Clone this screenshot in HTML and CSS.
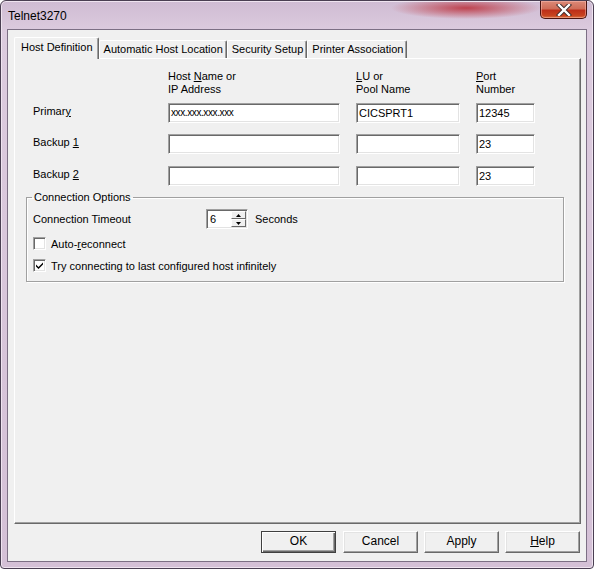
FILE: index.html
```html
<!DOCTYPE html>
<html>
<head>
<meta charset="utf-8">
<title>Telnet3270</title>
<link rel="stylesheet" href="styles.css">
</head>
<body>
<div class="window">
  <div class="titlebar">
    <span class="title">Telnet3270</span>
    <div class="close-btn">
      <svg width="16" height="12" viewBox="0 0 16 12">
        <path d="M3 1 L13 11 M13 1 L3 11" stroke="#3a2a2a" stroke-width="4.2" stroke-linecap="square"/>
        <path d="M3 1 L13 11 M13 1 L3 11" stroke="#ffffff" stroke-width="2.4" stroke-linecap="square"/>
      </svg>
    </div>
  </div>
  <div class="client">
    <div class="tabs">
      <div class="tab active">Host Definition</div>
      <div class="tab">Automatic Host Location</div>
      <div class="tab">Security Setup</div>
      <div class="tab">Printer Association</div>
    </div>
    <div class="panel">
      <div class="hosts">
        <div></div>
        <div class="colhead">Host <u>N</u>ame or<br>IP Address</div>
        <div class="colhead"><u>L</u>U or<br>Pool Name</div>
        <div class="colhead"><u>P</u>ort<br>Number</div>

        <div class="rowlabel">Primar<u>y</u></div>
        <div class="field small-text">xxx.xxx.xxx.xxx</div>
        <div class="field">CICSPRT1</div>
        <div class="field">12345</div>

        <div class="rowlabel">Backup <u>1</u></div>
        <div class="field"></div>
        <div class="field"></div>
        <div class="field">23</div>

        <div class="rowlabel">Backup <u>2</u></div>
        <div class="field"></div>
        <div class="field"></div>
        <div class="field">23</div>
      </div>

      <fieldset class="group">
        <legend>Connection Options</legend>
        <div class="opt-row timeout-row">
          <span class="timeout-label">Connection Timeout</span>
          <div class="spinner">
            <div class="spin-value">6</div>
            <div class="spin-btns">
              <div class="spin-btn"><svg width="5" height="3" viewBox="0 0 5 3"><path d="M0 3 L2.5 0 L5 3 Z" fill="#000"/></svg></div>
              <div class="spin-btn"><svg width="5" height="3" viewBox="0 0 5 3"><path d="M0 0 L5 0 L2.5 3 Z" fill="#000"/></svg></div>
            </div>
          </div>
          <span class="seconds">Seconds</span>
        </div>
        <div class="opt-row check-row1">
          <span class="checkbox"></span>
          <span>Auto-<u>r</u>econnect</span>
        </div>
        <div class="opt-row check-row2">
          <span class="checkbox">
            <svg width="9" height="9" viewBox="0 0 9 9"><path d="M1 3.5 L3.5 6 L8 1.5 L8 3.5 L3.5 8 L1 5.5 Z" fill="#000"/></svg>
          </span>
          <span>Try connecting to last configured host infinitely</span>
        </div>
      </fieldset>
    </div>
    <div class="buttons">
      <div class="btn default">OK</div>
      <div class="btn">Cancel</div>
      <div class="btn">Apply</div>
      <div class="btn"><u>H</u>elp</div>
    </div>
  </div>
</div>
</body>
</html>
```

FILE: styles.css
```css
* { box-sizing: border-box; }

html, body {
  margin: 0;
  padding: 0;
  background: #ffffff;
}

body {
  font-family: "Liberation Sans", Arial, sans-serif;
  font-size: 11px;
  color: #000;
}

.window {
  width: 594px;
  height: 569px;
  border: 1px solid #4a3f52;
  border-radius: 6px 6px 4px 4px;
  padding: 0 6px 6px 6px;
  display: flex;
  flex-direction: column;
  background:
    radial-gradient(ellipse 75px 11px at 465px 7px, rgba(185, 35, 45, 0.8), rgba(185, 35, 45, 0) 100%),
    linear-gradient(to bottom, #cfbcd3 0px, #dccbde 30px, #d4c0d6 100%);
  box-shadow: inset 0 0 0 1px #efe4f0;
}

.titlebar {
  height: 28px;
  display: flex;
  align-items: flex-start;
  flex-shrink: 0;
}

.title {
  font-size: 12px;
  line-height: 16px;
  padding: 7px 0 0 1px;
  color: #000;
}

.close-btn {
  margin-left: auto;
  width: 47px;
  height: 18px;
  border: 1px solid #4a1410;
  border-top: none;
  border-radius: 0 0 5px 5px;
  background: linear-gradient(to bottom, #dc8a78 0%, #cf6d58 45%, #bd2f19 55%, #c8431f 85%, #d8703e 100%);
  box-shadow: inset 0 0 0 1px rgba(255, 200, 190, 0.45);
  display: flex;
  align-items: center;
  justify-content: center;
}

.client {
  flex: 1;
  background: #f0f0f0;
  border: 1px solid #7c6f84;
  padding: 7px 5px 0 6px;
  display: flex;
  flex-direction: column;
}

.tabs {
  display: flex;
  align-items: flex-end;
  height: 21px;
  position: relative;
  z-index: 1;
}

.tab {
  height: 18px;
  padding: 0 3px 0 4px;
  line-height: 17px;
  background: #f0f0f0;
  border-top: 1px solid #ffffff;
  border-left: 1px solid #ffffff;
  border-right: 1px solid #696969;
  box-shadow: inset -1px 0 0 #a0a0a0;
  border-radius: 2px 2px 0 0;
  white-space: nowrap;
}

.tab.active {
  height: 22px;
  margin-bottom: -1px;
  padding: 0 5px 0 6px;
  line-height: 19px;
}

.panel {
  height: 466px;
  border-top: 1px solid #ffffff;
  border-left: 1px solid #ffffff;
  border-right: 1px solid #696969;
  border-bottom: 1px solid #696969;
  box-shadow: inset -1px -1px 0 #a0a0a0;
  padding: 11px 15px 0 11px;
  display: flex;
  flex-direction: column;
}

.hosts {
  display: grid;
  margin-left: 7px;
  grid-template-columns: 119px 172px 104px 59px;
  grid-template-rows: 33px 31px 32px 20px;
  column-gap: 16px;
  align-items: start;
}

.colhead {
  line-height: 13px;
}

.rowlabel {
  line-height: 17px;
}

.field {
  height: 20px;
  background: #fff;
  border-top: 1px solid #a0a0a0;
  border-left: 1px solid #a0a0a0;
  border-right: 1px solid #ffffff;
  border-bottom: 1px solid #ffffff;
  box-shadow: inset 1px 1px 0 #696969, inset -1px -1px 0 #e3e3e3;
  padding: 0 0 0 2px;
  line-height: 18px;
  white-space: nowrap;
  overflow: hidden;
}

.field.small-text {
  letter-spacing: -0.4px;
  font-size: 10px;
}

.group {
  margin: 5px 0 0 0;
  width: 538px;
  border: 1px solid #a0a0a0;
  box-shadow: inset 1px 1px 0 #ffffff, 1px 1px 0 #ffffff;
  padding: 5px 6px 4px 6px;
}

.group legend {
  padding: 0 2px;
  margin-left: -1px;
  line-height: 13px;
}

.opt-row {
  display: flex;
  align-items: center;
}

.timeout-row {
  height: 20px;
  margin-bottom: 4px;
}

.check-row1 { height: 21px; }
.check-row2 { height: 23px; }

.timeout-label {
  width: 173px;
}

.spinner {
  width: 42px;
  height: 20px;
  display: flex;
  background: #fff;
  border-top: 1px solid #a0a0a0;
  border-left: 1px solid #a0a0a0;
  border-right: 1px solid #ffffff;
  border-bottom: 1px solid #ffffff;
  box-shadow: inset 1px 1px 0 #696969, inset -1px -1px 0 #e3e3e3;
}

.spin-value {
  flex: 1;
  padding: 1px 0 0 3px;
  line-height: 17px;
}

.spin-btns {
  width: 16px;
  padding: 1px 1px 1px 0;
  display: flex;
  flex-direction: column;
}

.spin-btn {
  flex: 1;
  background: #f0f0f0;
  border-top: 1px solid #ffffff;
  border-left: 1px solid #ffffff;
  border-right: 1px solid #696969;
  border-bottom: 1px solid #696969;
  display: flex;
  align-items: center;
  justify-content: center;
}

.spin-btn svg { display: block; }

.seconds {
  margin-left: 7px;
}

.checkbox {
  width: 13px;
  height: 13px;
  margin-right: 5px;
  background: #fff;
  border-top: 1px solid #a0a0a0;
  border-left: 1px solid #a0a0a0;
  border-right: 1px solid #ffffff;
  border-bottom: 1px solid #ffffff;
  box-shadow: inset 1px 1px 0 #696969, inset -1px -1px 0 #e3e3e3;
  display: flex;
  align-items: center;
  justify-content: center;
  flex-shrink: 0;
}

.checkbox svg { display: block; }

.buttons {
  margin-top: 7px;
  margin-right: 1px;
  display: flex;
  justify-content: flex-end;
  gap: 6px;
}

.btn {
  width: 75px;
  height: 22px;
  background: #f0f0f0;
  border-top: 1px solid #ffffff;
  border-left: 1px solid #ffffff;
  border-right: 1px solid #696969;
  border-bottom: 1px solid #696969;
  box-shadow: inset -1px -1px 0 #a0a0a0, inset 1px 1px 0 #e3e3e3;
  text-align: center;
  line-height: 19px;
  font-size: 12px;
}

.btn.default {
  border: 1px solid #404040;
  box-shadow: inset 1px 1px 0 #ffffff, inset -1px -1px 0 #696969, inset -2px -2px 0 #a0a0a0;
  margin-right: 1px;
}
```
